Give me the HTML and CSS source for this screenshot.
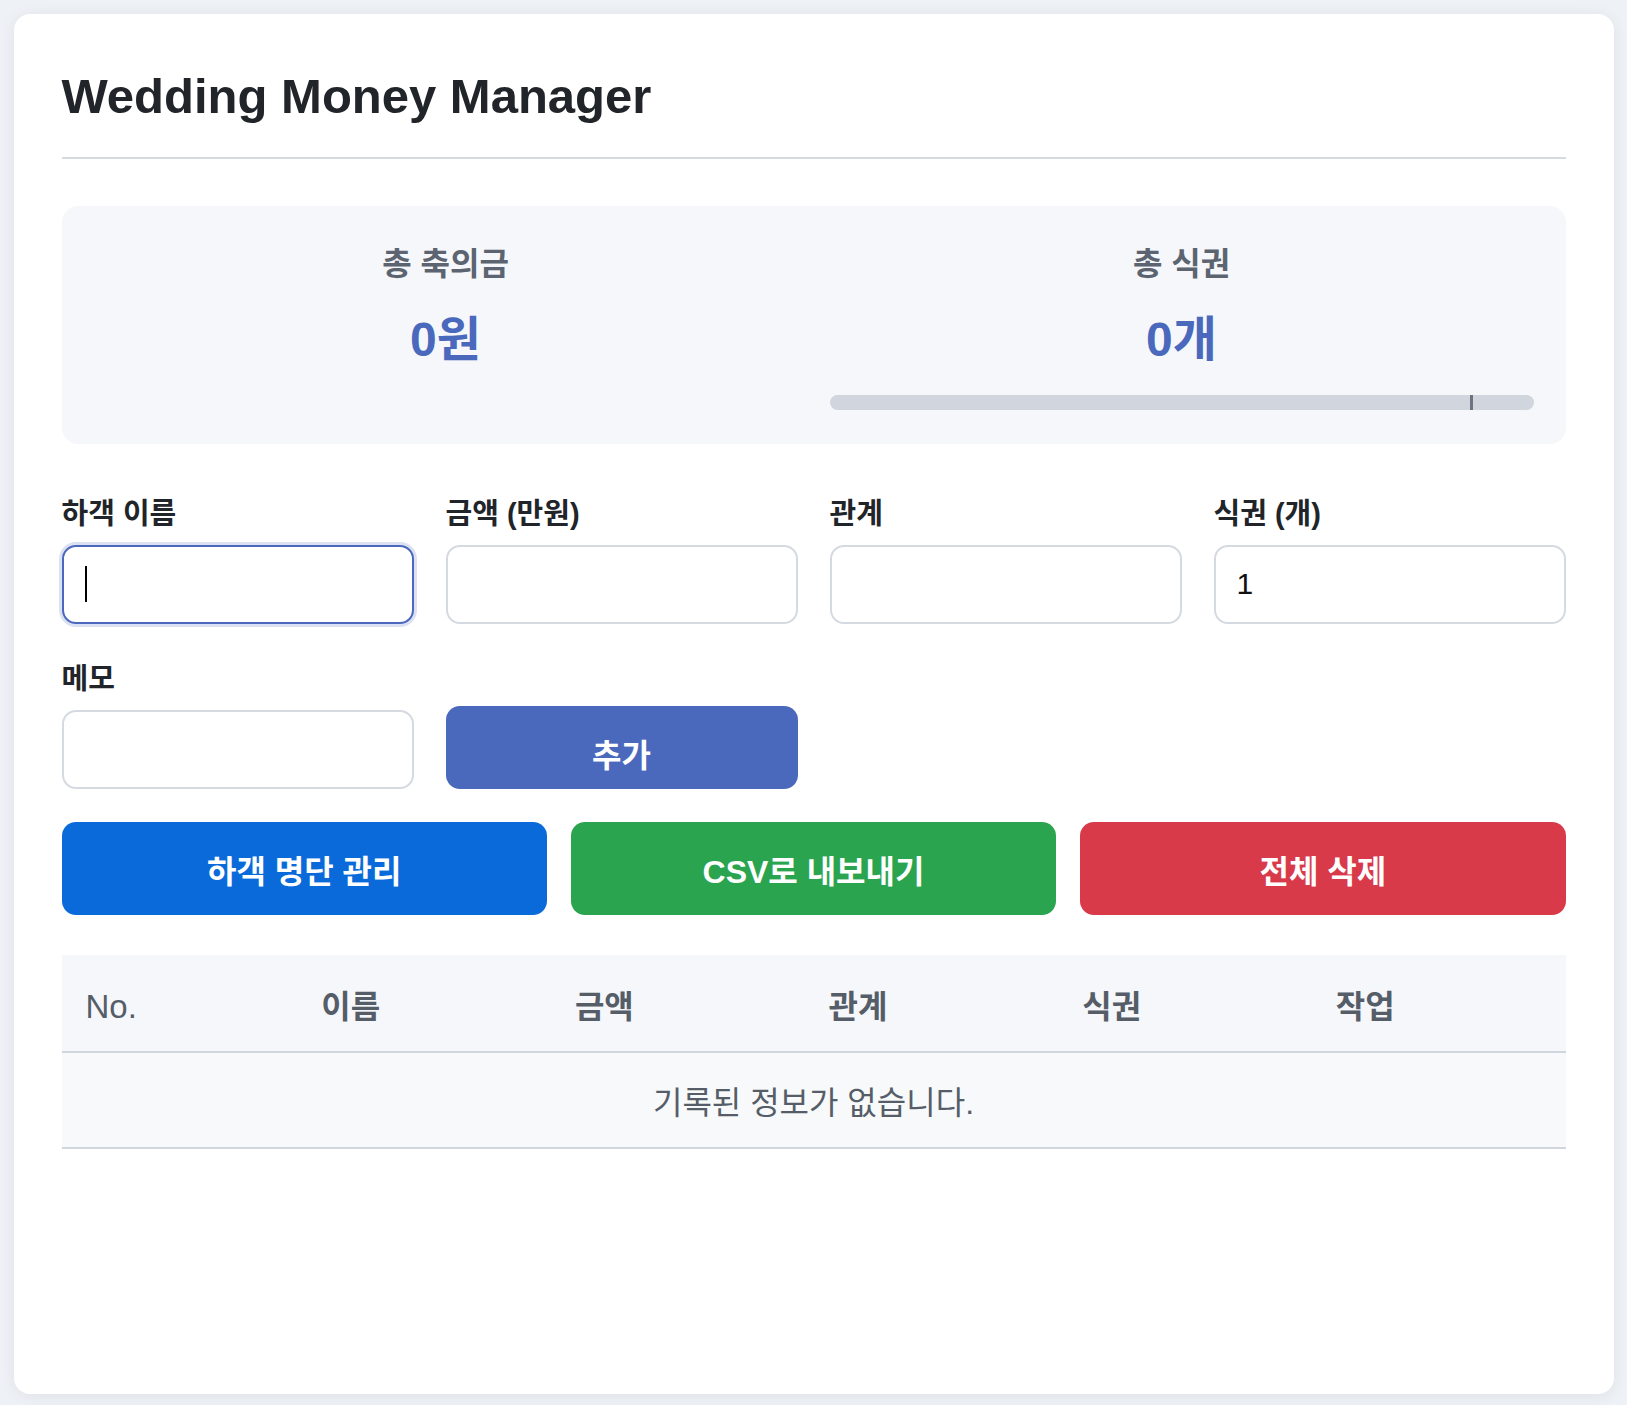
FILE: index.html
```html
<!DOCTYPE html>
<html lang="ko">
<head>
<meta charset="utf-8">
<title>Wedding Money Manager</title>
<link rel="stylesheet" href="styles.css">
</head>
<body>
<div class="card">
  <h1 class="title">Wedding Money Manager</h1>

  <section class="stats">
    <div class="stat">
      <div class="stat-label">총 축의금</div>
      <div class="stat-value">0원</div>
    </div>
    <div class="stat">
      <div class="stat-label">총 식권</div>
      <div class="stat-value">0개</div>
      <div class="meter"><span class="meter-mark"></span></div>
    </div>
  </section>

  <form class="entry">
    <div class="field">
      <label class="field-label" for="guest">하객 이름</label>
      <div class="input-wrap">
        <input id="guest" class="field-input is-focused" type="text" autofocus>
        <span class="caret"></span>
      </div>
    </div>
    <div class="field">
      <label class="field-label" for="amount">금액 (만원)</label>
      <input id="amount" class="field-input" type="text">
    </div>
    <div class="field">
      <label class="field-label" for="relation">관계</label>
      <input id="relation" class="field-input" type="text">
    </div>
    <div class="field">
      <label class="field-label" for="tickets">식권 (개)</label>
      <input id="tickets" class="field-input" type="text" value="1">
    </div>
    <div class="field">
      <label class="field-label" for="memo">메모</label>
      <input id="memo" class="field-input" type="text">
    </div>
    <button class="add-btn" type="button">추가</button>
  </form>

  <div class="actions">
    <button class="act act-blue" type="button">하객 명단 관리</button>
    <button class="act act-green" type="button">CSV로 내보내기</button>
    <button class="act act-red" type="button">전체 삭제</button>
  </div>

  <table class="records">
    <thead>
      <tr><th><span class="th-latin">No.</span></th><th>이름</th><th>금액</th><th>관계</th><th>식권</th><th>작업</th></tr>
    </thead>
    <tbody>
      <tr><td class="empty" colspan="6">기록된 정보가 없습니다.</td></tr>
    </tbody>
  </table>
</div>
</body>
</html>
```

FILE: styles.css
```css
* { box-sizing: border-box; }

html, body { margin: 0; }

body {
  background: #eef1f5;
  padding: 14px 0 11px;
  font-family: "Liberation Sans", Arial, "Noto Sans CJK KR", sans-serif;
  color: #212529;
}

.card {
  max-width: 1600px;
  margin: 0 auto;
  background: #fff;
  border-radius: 16px;
  box-shadow: 0 2px 16px rgba(0, 0, 0, 0.07);
  padding: 54px 48px 48px;
  min-height: calc(100vh - 25px);
}

.title {
  margin: 0;
  font-size: 49px;
  font-weight: 700;
  line-height: 56px;
  padding-bottom: 33px;
  border-bottom: 2px solid #d5dae1;
  color: #212529;
}

.stats {
  margin-top: 47px;
  background: #f5f7fa;
  border-radius: 16px;
  padding: 32px 32px 34px;
  display: grid;
  grid-template-columns: 1fr 1fr;
  column-gap: 32px;
  text-align: center;
}

.stat-label {
  margin-top: 4px;
  font-size: 32px;
  line-height: 44px;
  font-weight: 700;
  color: #5b6470;
}

.stat-value {
  margin-top: 25px;
  font-size: 48px;
  line-height: 58px;
  font-weight: 700;
  color: #4a69bd;
}

.meter {
  position: relative;
  margin-top: 26px;
  height: 15px;
  border-radius: 8px;
  background: #d1d6de;
}

.meter-mark {
  position: absolute;
  left: 91%;
  top: 0;
  width: 3px;
  height: 100%;
  background: #6b7280;
}

.entry {
  margin-top: 51px;
  display: grid;
  grid-template-columns: repeat(4, 1fr);
  column-gap: 32px;
  row-gap: 36px;
}

.field { display: flex; flex-direction: column; }

.field-label {
  display: block;
  font-size: 29px;
  line-height: 38px;
  font-weight: 700;
  margin-bottom: 12px;
  color: #212529;
}

.input-wrap { position: relative; }

.caret {
  position: absolute;
  left: 23px;
  top: 21px;
  width: 2px;
  height: 36px;
  background: #000;
}

.field-input {
  display: block;
  width: 100%;
  height: 79px;
  border: 2px solid #d5dae1;
  border-radius: 14px;
  padding: 0 21px 2px;
  font-family: "Liberation Sans", Arial, sans-serif;
  font-size: 30px;
  color: #111;
  background: #fff;
  outline: none;
  caret-color: transparent;
}

.field-input.is-focused,
.field-input:focus {
  border-color: #4a69bd;
  box-shadow: 0 0 0 3px rgba(74, 105, 189, 0.2);
}

.add-btn {
  align-self: end;
  height: 83px;
  border: 0;
  border-radius: 14px;
  background: #4a69bd;
  color: #fff;
  font-family: "Liberation Sans", Arial, "Noto Sans CJK KR", sans-serif;
  font-size: 32px;
  font-weight: 700;
  padding-top: 12px;
}

.actions {
  margin-top: 33px;
  display: grid;
  grid-template-columns: repeat(3, 1fr);
  column-gap: 24px;
}

.act {
  height: 93px;
  border: 0;
  border-radius: 14px;
  color: #fff;
  font-family: "Liberation Sans", Arial, "Noto Sans CJK KR", sans-serif;
  font-size: 32px;
  font-weight: 700;
  padding-top: 2px;
}

.act-blue { background: #0b6ada; }
.act-green { background: #2aa44f; }
.act-red { background: #d83a4a; }

.records {
  margin-top: 40px;
  width: 100%;
  border-collapse: collapse;
}

.records th {
  background: #f5f7fa;
  text-align: left;
  padding: 29px 24px 21px;
  font-size: 32px;
  line-height: 46px;
  font-weight: 700;
  color: #555e68;
  border-bottom: 2px solid #d1d6de;
}

.th-latin { font-weight: 400; font-size: 33px; }

.records td.empty {
  background: #f8f9fa;
  text-align: center;
  padding: 28px 24px 21px;
  font-size: 32px;
  line-height: 45px;
  color: #555e68;
  border-bottom: 2px solid #d1d6de;
}
```
